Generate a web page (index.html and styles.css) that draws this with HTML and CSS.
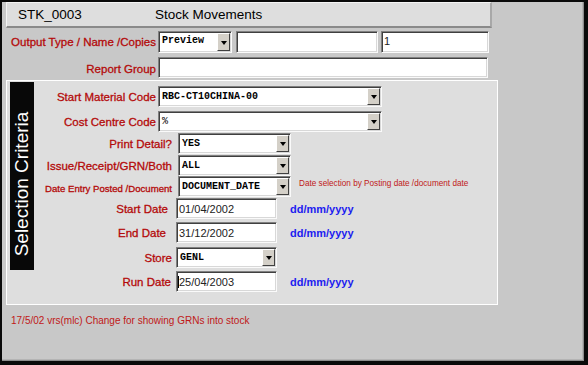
FILE: index.html
```html
<!DOCTYPE html>
<html>
<head>
	<title>STK_0003 Stock Movements</title>
	<link rel="stylesheet" href="styles.css">
</head>
<body>
	<div class="window">
		<div class="titlebar">
			<span class="code">STK_0003</span>
			<span class="name">Stock Movements</span>
		</div>

		<div class="top-form">
			<div class="row r-output">
				<label class="lbl">Output Type / Name /Copies</label>
				<div class="select w-preview top-text"><span class="val">Preview</span><span class="drop"><i></i></span></div>
				<div class="field w-name"></div>
				<div class="field w-copies top-text"><span class="txt">1</span></div>
			</div>
			<div class="row r-group">
				<label class="lbl">Report Group</label>
				<div class="field w-group"></div>
			</div>
		</div>

		<div class="panel">
			<div class="sidebar"><span>Selection Criteria</span></div>
			<div class="criteria">
				<div class="row wide">
					<label class="lbl">Start Material Code</label>
					<div class="select w-long"><span class="val">RBC-CT10CHINA-00</span><span class="drop"><i></i></span></div>
				</div>
				<div class="row wide">
					<label class="lbl">Cost Centre Code</label>
					<div class="select w-long"><span class="val light">%</span><span class="drop"><i></i></span></div>
				</div>
				<div class="row">
					<label class="lbl">Print Detail?</label>
					<div class="select w-mid shift"><span class="val">YES</span><span class="drop"><i></i></span></div>
				</div>
				<div class="row">
					<label class="lbl">Issue/Receipt/GRN/Both</label>
					<div class="select w-mid shift"><span class="val">ALL</span><span class="drop"><i></i></span></div>
				</div>
				<div class="row">
					<label class="lbl small">Date Entry Posted /Document</label>
					<div class="select w-mid shift"><span class="val">DOCUMENT_DATE</span><span class="drop"><i></i></span></div>
					<span class="note">Date selection by Posting date /document date</span>
				</div>
				<div class="row">
					<label class="lbl pad4">Start Date</label>
					<div class="field w-date"><span class="txt">01/04/2002</span></div>
					<span class="fmt">dd/mm/yyyy</span>
				</div>
				<div class="row">
					<label class="lbl pad6">End Date</label>
					<div class="field w-date"><span class="txt">31/12/2002</span></div>
					<span class="fmt">dd/mm/yyyy</span>
				</div>
				<div class="row">
					<label class="lbl">Store</label>
					<div class="select w-date"><span class="val">GENL</span><span class="drop"><i></i></span></div>
				</div>
				<div class="row">
					<label class="lbl pad1">Run Date</label>
					<div class="field w-date"><span class="txt caret">25/04/2003</span></div>
					<span class="fmt">dd/mm/yyyy</span>
				</div>
			</div>
		</div>

		<p class="footnote">17/5/02 vrs(mlc) Change for showing GRNs into stock</p>
	</div>
</body>
</html>
```

FILE: styles.css
```css
body {
	margin: 0;
	background-color: #000;
	font-family: "Liberation Sans", Arial, sans-serif;
}
.window {
	box-sizing: border-box;
	width: 588px;
	height: 365px;
	border-left: 2px solid #0a0a0a;
	border-top: 2px solid #0a0a0a;
	border-right: 4px solid #0a0a0a;
	border-bottom: 4px solid #0a0a0a;
	background-color: #c8c8c8;
	box-shadow: inset -1px -1px 0 #8c8c8c, inset -2px -2px 0 #b4b4b4;
}

/* title bar */
.titlebar {
	box-sizing: border-box;
	display: flex;
	align-items: center;
	width: 486px;
	height: 26px;
	margin-left: 4px;
	padding-left: 11px;
	background-color: #dedede;
	border-top: 1px solid #f4f4f4;
	border-left: 1px solid #f4f4f4;
	border-bottom: 2px solid #8a8a8a;
	border-right: 2px solid #a8a8a8;
	font-size: 13.5px;
	color: #000;
}
.titlebar .code {
	width: 137px;
}

/* rows */
.row {
	display: flex;
	align-items: flex-start;
}
.lbl {
	display: flex;
	align-items: center;
	justify-content: flex-end;
	box-sizing: border-box;
	height: 21px;
	font-size: 11.5px;
	color: #b40a0a;
	-webkit-text-stroke: 0.3px #b40a0a;
	white-space: nowrap;
}
.lbl.small {
	font-size: 9.6px;
	padding-top: 3px;
}
.lbl.pad4 { padding-right: 4px; }
.lbl.pad6 { padding-right: 6px; }
.lbl.pad1 { padding-right: 1px; }

.top-form {
	margin-top: 3px;
}
.top-form .row {
	gap: 2px;
}
.top-form .lbl {
	width: 154px;
}
.r-output {
	height: 26px;
}
.r-output .lbl {
	height: 22px;
}
.r-group .lbl {
	padding-top: 2px;
}

/* fields */
.field, .select {
	box-sizing: border-box;
	display: flex;
	align-items: center;
	height: 21px;
	background-color: #fff;
	border-top: 1px solid #808080;
	border-left: 1px solid #808080;
	border-bottom: 1px solid #fafafa;
	border-right: 1px solid #fafafa;
	box-shadow: inset 1px 1px 0 #404040, inset -1px -1px 0 #d8d8d8;
}
.top-text {
	align-items: flex-start;
	height: 22px;
}
.txt {
	padding: 0 0 0 2px;
	font-size: 11px;
	color: #222;
}
.top-text .txt {
	padding-top: 3px;
}
.caret {
	border-left: 1px solid #000;
	margin-left: 1px;
	padding-left: 0;
}
.val {
	flex: 1;
	padding-left: 3px;
	font-family: "Liberation Mono", "Courier New", monospace;
	font-weight: bold;
	font-size: 10px;
	color: #000;
	white-space: nowrap;
	overflow: hidden;
}
.val.light {
	font-weight: normal;
}
.top-text .val {
	padding-top: 3px;
}
.drop {
	box-sizing: border-box;
	display: flex;
	align-items: center;
	justify-content: center;
	align-self: stretch;
	width: 13px;
	margin: 1px 1px 1px 0;
	background-color: #d4d0c8;
	border-top: 1px solid #fff;
	border-left: 1px solid #fff;
	border-bottom: 1px solid #404040;
	border-right: 1px solid #404040;
}
.drop i {
	width: 0;
	height: 0;
	border-left: 3px solid transparent;
	border-right: 3px solid transparent;
	border-top: 4px solid #000;
	margin-top: 1px;
}

.w-preview { width: 74px; }
.w-name { width: 142px; margin-left: 2px; height: 22px; }
.w-copies { width: 108px; margin-left: 1px; }
.w-group { width: 330px; }
.w-long { width: 224px; }
.w-mid { width: 113px; }
.w-date { width: 101px; }
.shift { margin-left: 2px; }

/* selection criteria panel */
.panel {
	box-sizing: border-box;
	display: flex;
	align-items: flex-start;
	width: 492px;
	height: 225px;
	margin: 2px 0 0 4px;
	background-color: #dedede;
	border: 1px solid #fff;
}
.sidebar {
	display: flex;
	align-items: center;
	justify-content: center;
	width: 24px;
	height: 188px;
	margin: 1px 0 0 3px;
	background-color: #080808;
}
.sidebar span {
	display: block;
	transform: rotate(-90deg);
	white-space: nowrap;
	color: #fff;
	font-size: 19px;
	margin-top: 16px;
}
.criteria {
	display: grid;
	grid-template-rows: 25px 22px 22px 21px 22px 24px 25px 24px 21px;
	margin-top: 5px;
}
.criteria .row {
	gap: 4px;
}
.criteria .lbl {
	width: 138px;
}
.criteria .row.wide {
	gap: 2px;
}
.criteria .row.wide .lbl {
	width: 122px;
}
.note {
	margin: 3px 0 0 4px;
	font-size: 8.2px;
	color: #c01818;
	white-space: nowrap;
}
.fmt {
	margin: 5px 0 0 9px;
	font-size: 11px;
	font-weight: bold;
	color: #1c1cf0;
}

.footnote {
	margin: 10px 0 0 9px;
	font-size: 10px;
	color: #c01818;
}
```
